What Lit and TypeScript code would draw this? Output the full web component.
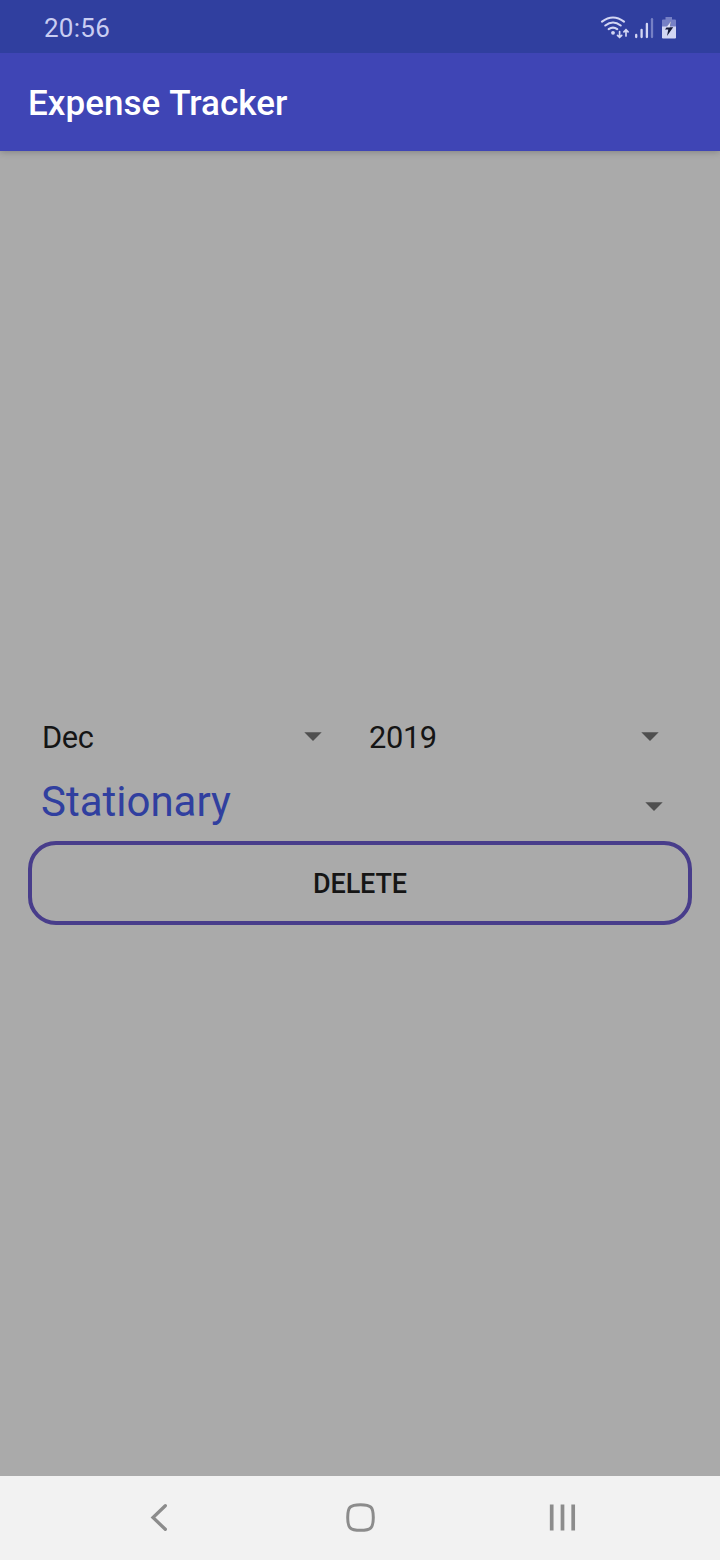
import { LitElement, html, css } from "lit";
import { customElement, property } from "lit/decorators.js";

@customElement("drop-down")
class DropDown extends LitElement {
  @property() label = "";
  static styles = css`
    :host { display: flex; align-items: center; justify-content: space-between; }
    .label { padding-top: var(--label-shift, 0px); }
    .arrow { display: block; width: 18px; height: 10px; flex: none; margin-top: var(--arrow-shift, 0px); }
  `;
  render() {
    return html`<span class="label">${this.label}</span>
      <svg class="arrow" viewBox="0 0 18 10"><path d="M0.3 0.2H17.7L9 9.1Z" fill="#4f4f4f" /></svg>`;
  }
}

@customElement("app-root")
class AppRoot extends LitElement {
  static styles = css`
    :host { display: flex; flex-direction: column; width: 720px; height: 1560px; overflow: hidden;
      background: #aaaaaa; font-family: Roboto, sans-serif; color: #151515; }
    .status { box-sizing: border-box; height: 53px; flex: none; background: #303f9f; display: flex;
      justify-content: space-between; padding: 0 40px 0 44px; color: #c9cdf2; position: relative; z-index: 1; }
    .clock { font-size: 26px; line-height: 56px; letter-spacing: 0.25px; }
    .icons { display: block; width: 80px; height: 26px; margin-top: 14px; }
    .bar { box-sizing: border-box; height: 98px; flex: none; background: #3f45b5; padding: 2px 28px 0;
      color: #fff; font-size: 35px; font-weight: 500; line-height: 98px; letter-spacing: 0.05px; word-spacing: 0.8px;
      box-shadow: 0 1px 7px rgba(0, 0, 0, 0.24); }
    .content { flex: 1; display: flex; flex-direction: column; padding: 559px 28px 0; }
    .dates { display: flex; height: 54px; font-size: 30.8px; line-height: 54px; letter-spacing: -0.35px; }
    .month { width: 294px; padding: 0 0 0 14px; box-sizing: border-box; --label-shift: 2px; }
    .year { width: 290px; margin-left: 47px; --label-shift: 2px; }
    .dates drop-down { height: 54px; }
    .category { height: 66px; padding: 0 29px 0 13px; margin-top: 5px; font-size: 42px; line-height: 66px;
      color: #303f9f; --arrow-shift: 9px; }
    .month, .year { --label-shift: 0px; line-height: 56px; align-items: flex-start; --arrow-shift: 22px; }
    .delete { box-sizing: border-box; height: 84px; margin-top: 6px; border: 4px solid #483d8b;
      border-radius: 28px; background: none; padding: 2px 0 0; color: #151515;
      font: 500 27px Roboto, sans-serif; letter-spacing: -0.12px; }
    .nav { height: 84px; flex: none; background: #f2f2f2; }
    .nav svg { display: block; width: 720px; height: 84px; }
  `;
  render() {
    return html`
      <div class="status">
        <span class="clock">20:56</span>
        <svg class="icons" viewBox="600 14 80 26" fill="none" stroke="#d3d6f3" stroke-width="2.1" stroke-linecap="round">
          <path d="M602 21.7Q613 13.3 624 21.7M605.3 25.5Q613 19.5 620.7 25.5M608.7 29.2Q613 25.9 617.2 29.2" />
          <circle cx="613" cy="32.8" r="1.9" fill="#d3d6f3" stroke="none" />
          <path d="M619.6 31.5V37.2M617.5 35.3L619.6 37.4L621.7 35.3M626 36V29.8M623.9 31.9L626 29.8L628.1 31.9" stroke-width="1.7" />
          <path d="M636.2 35V37M641.6 29.8V37M646.9 24V37" stroke-width="2.3" />
          <path d="M652 19.2V37" stroke-width="2.3" stroke="#7680c5" />
          <path d="M665.5 17H672V19.5H675Q676 19.5 676 20.5V27H662V20.5Q662 19.5 663 19.5H665.5Z" fill="#7680c5" stroke="none" />
          <path d="M662 26.5H676V37.2Q676 38.5 675 38.5H663Q662 38.5 662 37.2Z" fill="#d3d6f3" stroke="none" />
          <path d="M671 21.5L665 29.5H668.3L667 36L673.2 27.3H669.8Z" fill="#151a38" stroke="none" />
          <path d="M671 21.3L666.2 27.6H669.8Z" fill="#e0e2f8" stroke="none" />
        </svg>
      </div>
      <div class="bar">Expense Tracker</div>
      <div class="content">
        <div class="dates">
          <drop-down class="month" label="Dec"></drop-down>
          <drop-down class="year" label="2019"></drop-down>
        </div>
        <drop-down class="category" label="Stationary"></drop-down>
        <button class="delete">DELETE</button>
      </div>
      <div class="nav">
        <svg viewBox="0 1476 720 84" fill="none" stroke="#8c8c8c" stroke-width="3" stroke-linecap="round">
          <path d="M165.3 1505.7L153 1517.5L165.3 1529.3" stroke-width="3.3" />
          <path d="M360.5 1504.7C371 1504.7 373.3 1507 373.3 1517.5S371 1530.3 360.5 1530.3S347.7 1528 347.7 1517.5S350 1504.7 360.5 1504.7Z" />
          <path d="M551.7 1504.5V1530.5M562.5 1504.5V1530.5M573.2 1504.5V1530.5" stroke-width="3.7" stroke-linecap="butt" />
        </svg>
      </div>
    `;
  }
}
